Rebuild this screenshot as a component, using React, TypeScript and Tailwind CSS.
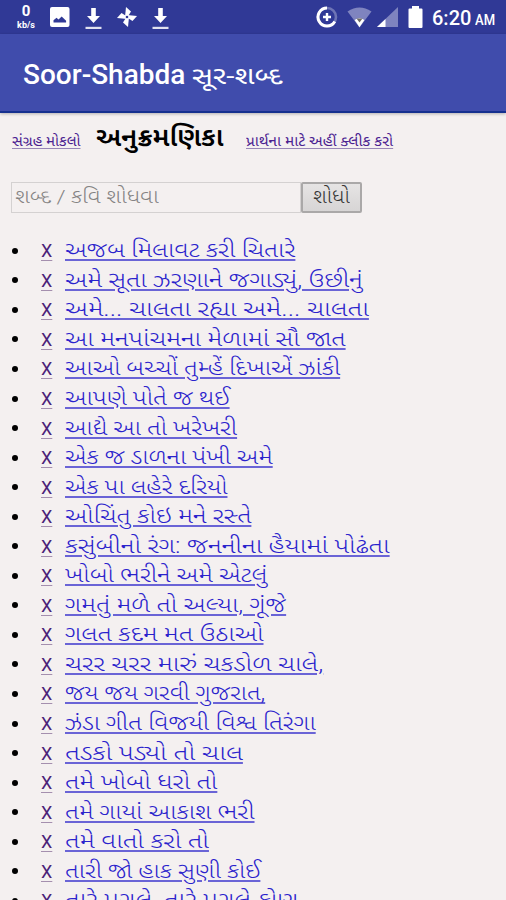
import { useLayoutEffect, useRef, useState } from "react";
import type { ReactNode } from "react";

const songs: [string, number][] = [
  ["અજબ મિલાવટ કરી ચિતારે", 230],
  ["અમે સૂતા ઝરણાને જગાડ્યું, ઉછીનું", 298],
  ["અમે... ચાલતા રહ્યા અમે... ચાલતા", 304],
  ["આ મનપાંચમના મેળામાં સૌ જાત", 281],
  ["આઓ બચ્ચોં તુમ્હેં દિખાએં ઝાંકી", 275],
  ["આપણે પોતે જ થઈ", 165],
  ["આદ્યે આ તો ખરેખરી", 172],
  ["એક જ ડાળના પંખી અમે", 208],
  ["એક પા લહેરે દરિયો", 163],
  ["ઓચિંતુ કોઇ મને રસ્તે", 186],
  ["કસુંબીનો રંગ: જનનીના હૈયામાં પોઢંતા", 325],
  ["ખોબો ભરીને અમે એટલું", 203],
  ["ગમતું મળે તો અલ્યા, ગૂંજે", 221],
  ["ગલત કદમ મત ઉઠાઓ", 198],
  ["ચરર ચરર મારું ચકડોળ ચાલે,", 258],
  ["જય જય ગરવી ગુજરાત,", 200],
  ["ઝંડા ગીત વિજયી વિશ્વ તિરંગા", 251],
  ["તડકો પડ્યો તો ચાલ", 178],
  ["તમે ખોબો ધરો તો", 152],
  ["તમે ગાયાં આકાશ ભરી", 190],
  ["તમે વાતો કરો તો", 144],
  ["તારી જો હાક સુણી કોઈ", 195],
  ["તારે પગલે, તારે પગલે કોણ", 233],
];

/* Keeps a line of text at a set width, whatever the font's own metrics. */
function Fit({ width, children }: { width: number; children: ReactNode }) {
  const ref = useRef<HTMLSpanElement>(null);
  const [scale, setScale] = useState(1);
  useLayoutEffect(() => {
    if (ref.current) setScale(width / ref.current.offsetWidth);
  }, [width]);
  return (
    <span className="block shrink-0 whitespace-nowrap" style={{ width }}>
      <span ref={ref} className="inline-block origin-left" style={{ transform: `scaleX(${scale})` }}>
        {children}
      </span>
    </span>
  );
}

function Download() {
  return (
    <svg width="17" height="23" viewBox="0 0 17 23" fill="#fff">
      <path d="M6.2 1h4.600v8h4.200l-6.500 7-6.500-7h4.200z" />
      <path d="M0.5 19.800h16v2.200h-16z" opacity=".85" />
    </svg>
  );
}

export default function App() {
  return (
    <div className="flex h-[900px] w-[506px] flex-col overflow-hidden bg-[#f4f0f0] font-['Roboto','Noto_Sans_Gujarati','Noto_Sans',sans-serif]">
      <header className="shrink-0">
        <div className="flex h-[34px] items-center bg-[#303996] text-white">
          <div className="ml-4 flex w-5 flex-col items-center">
            <span className="text-[15px] leading-[17px] font-bold">0</span>
            <span className="text-[9px] leading-[11px] font-bold">kb/s</span>
          </div>
          <svg className="ml-[14px]" width="20" height="20" viewBox="0 0 20 20">
            <rect width="19.5" height="20" rx="2" fill="#fff" />
            <path d="M3.5 15.5v-2.2l3-2.600 2 1.800 3.200-3 4.400 4.200v1.800z" fill="#303996" />
          </svg>
          <span className="ml-[15px] pt-0.5"><Download /></span>
          <svg className="ml-[14px]" width="22" height="22" viewBox="0 0 22 22" fill="#fff">
            <path d="M10 1l5 4.5-3.500 5.500H9z" />
            <path d="M10 1l5 4.5-3.500 5.500H9z" transform="rotate(90 11 11)" />
            <path d="M10 1l5 4.5-3.500 5.500H9z" transform="rotate(180 11 11)" />
            <path d="M10 1l5 4.5-3.500 5.500H9z" transform="rotate(270 11 11)" />
            <circle cx="11" cy="11" r="1.300" fill="#303996" />
          </svg>
          <span className="ml-[14px] pt-0.5"><Download /></span>
          <svg className="ml-[147px]" width="22" height="22" viewBox="0 0 22 22" fill="none" stroke="#fff">
            <circle cx="11" cy="11" r="9" strokeWidth="2.6" opacity=".3" />
            <path d="M11 2A9 9 0 1 0 18.8 15.5" strokeWidth="3" />
            <path d="M11 7v8M7 11h8" strokeWidth="2.4" />
          </svg>
          <svg className="ml-[9px]" width="25" height="21" viewBox="0 0 25 21">
            <path d="M0.5 4.500Q12.500-3.500 24.500 4.500L12.500 20.500z" fill="#7f84bf" />
            <path d="M7.600 13Q12.500 9.500 17.400 13l-4.900 7.200z" fill="#fff" />
            <path d="M9.500 11.500h6l-3 4z" fill="#6d6a65" />
          </svg>
          <svg className="ml-[5px]" width="21" height="21" viewBox="0 0 21 21">
            <path d="M21 0v20H0z" fill="#7f84bf" />
            <path d="M8.500 12v8H0z" fill="#fff" />
          </svg>
          <svg className="ml-[10px]" width="15" height="22" viewBox="0 0 15 22" fill="#fff">
            <path d="M4 0h7v2.500h2.500q1 0 1 1V21q0 1-1 1h-12q-1 0-1-1V3.500q0-1 1-1H4z" />
          </svg>
          <span className="ml-[9px] flex items-baseline pt-[3px]">
            <Fit width={39}><span className="text-[20px] leading-6 font-medium">6:20</span></Fit>
            <span className="ml-1"><Fit width={20}><span className="text-[15px] leading-6 font-medium">AM</span></Fit></span>
          </span>
        </div>
        <div className="flex h-[79px] items-center border-b-2 border-[#16308f] bg-[#404cac] pt-[5px] pl-[23px] text-white shadow-[0_1px_3px_#0004]">
          <Fit width={162}><span className="text-[28px] leading-10 font-medium">Soor-Shabda</span></Fit>
          <span className="ml-[7px] pt-0.5"><Fit width={90}><span className="text-[24px] leading-10">સૂર-શબ્દ</span></Fit></span>
        </div>
      </header>
      <div className="mt-2 flex h-9 shrink-0 items-center pl-3 text-[#4b2290]">
        <a className="pt-[5px] text-[14px]"><Fit width={68}><span className="underline decoration-[#9886b8] decoration-1 underline-offset-2">સંગ્રહ મોકલો</span></Fit></a>
        <h1 className="ml-4 pb-[3px] text-[26px] font-semibold text-black"><Fit width={127}>અનુક્રમણિકા</Fit></h1>
        <a className="ml-[23px] pt-[5px] text-[14px]"><Fit width={147}><span className="underline decoration-[#9886b8] decoration-1 underline-offset-2">પ્રાર્થના માટે અહીં ક્લીક કરો</span></Fit></a>
      </div>
      <div className="mt-[25px] flex h-[31px] shrink-0 pl-[11px]">
        <div className="flex w-[290px] items-center border border-[#d4d1d1] pl-[3px] text-[19px] font-light text-[#858383]">
          <Fit width={144}>શબ્દ / કવિ શોધવા</Fit>
        </div>
        <button className="flex w-[61px] items-center rounded-[2px] border-2 border-[#aaa8a8] bg-linear-to-b from-[#e6e4e4] to-[#d7d5d5] pb-[3px] pl-[9px] text-[20px] font-light text-[#333]">
          <Fit width={37}>શોધો</Fit>
        </button>
      </div>
      <ul className="mt-[23px]">
        {songs.map(([title, width]) => (
          <li key={title} className="flex h-[29.55px] items-center">
            <span className="ml-3 h-[6px] w-[6px] rounded-full bg-black" />
            <a className="ml-[23px] w-[11px] text-[18px] text-[#4b1f78]"><Fit width={11}><span className="underline decoration-[#a48fae] decoration-1 underline-offset-[3px]">X</span></Fit></a>
            <a className="ml-[13px] pb-[2px] text-[22px] font-light text-[#2a22cc]"><Fit width={width}><span className="underline decoration-[#6a64d6] decoration-[1.5px] underline-offset-2">{title}</span></Fit></a>
          </li>
        ))}
      </ul>
    </div>
  );
}
